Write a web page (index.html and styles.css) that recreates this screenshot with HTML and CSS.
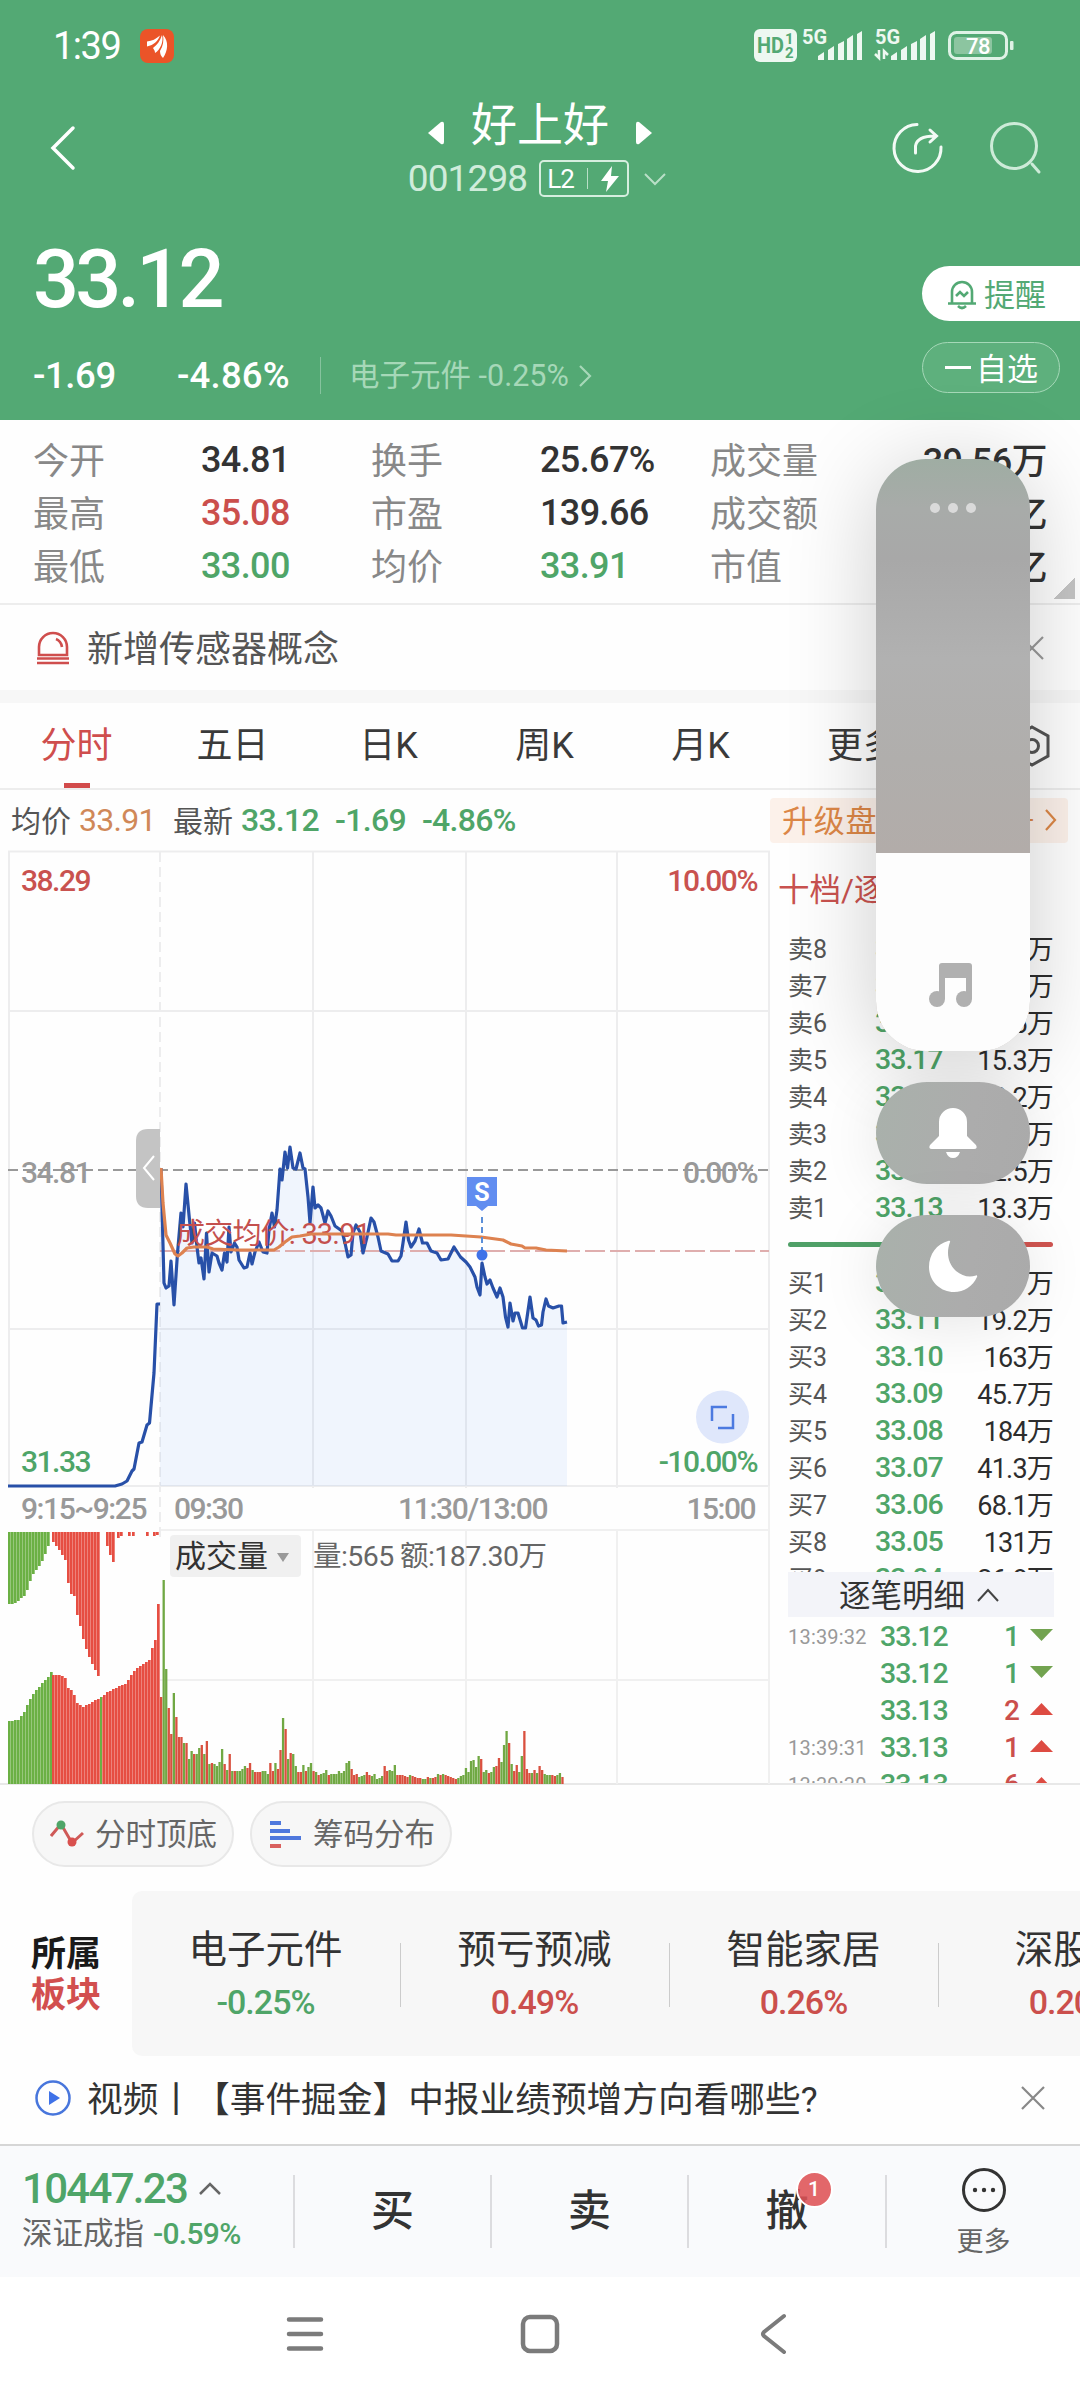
FILE: index.html
```html
<!DOCTYPE html>
<html lang="zh-CN">

<head>
    <meta charset="UTF-8">
    <meta name="viewport" content="width=device-width, initial-scale=1.0">
    <title>好上好 001298</title>
    <link rel="stylesheet" href="styles.css">
</head>

<body>

    <header class="header">
        <div class="status">
            <span class="clock">1:39</span>
            <svg class="app-icon" width="34" height="34" viewBox="0 0 34 34">
                <rect width="34" height="34" rx="8" fill="#eb5428"/>
                <path d="M7 17.500V12.500C12 12 16 10 20 6.500C18 12 14 16 7 17.500ZM13 19C17 16 20 12 22 6C24 13 20 21 15 24C15 22 14 20.500 13 19ZM20 22C23 17 24 12 23 6C29 12 28 22 23 29C21 27 20 25 20 22Z" fill="#fff"/>
            </svg>
            <svg class="status-icons" width="262" height="40" viewBox="752 26 262 40">
                <rect x="754" y="29" width="43" height="33" rx="6" fill="#eef8f1"/>
                <text x="757" y="53" class="hd" textLength="27" lengthAdjust="spacingAndGlyphs">HD</text>
                <text x="785" y="44" class="hd-num">1</text>
                <text x="785" y="58" class="hd-num">2</text>
                <text x="802" y="44" class="net">5G</text>
                <path d="M818 60V56L824 52V60ZM828 60V50L834 46V60ZM838 60V44L844 41V60ZM847 60V39L853 35V60ZM857 60V34L862 31V60Z" fill="#eef8f1"/>
                <text x="875" y="44" class="net">5G</text>
                <path d="M879 50v8l-4-4M884 59v-8l4 4" stroke="#eef8f1" stroke-width="2.500" fill="none"/>
                <path d="M891 60V56L897 52V60ZM901 60V50L907 46V60ZM911 60V44L917 41V60ZM920 60V39L926 35V60ZM930 60V34L935 31V60Z" fill="#eef8f1"/>
                <rect x="949.500" y="32.500" width="57" height="26" rx="7" fill="none" stroke="#dff2e6" stroke-width="3"/>
                <rect x="954" y="37" width="38" height="17" rx="3" fill="#8cc5a0"/>
                <rect x="1010" y="41" width="3.500" height="9" rx="1" fill="#dff2e6"/>
                <text x="978" y="54" class="batt">78</text>
            </svg>
        </div>

        <div class="nav">
            <svg class="back" width="28" height="48" viewBox="0 0 28 48"><path d="M25 4L5 24L25 44" fill="none" stroke="#fff" stroke-width="3.500" stroke-linecap="round"/></svg>
            <div class="title">
                <div class="name">
                    <svg width="16" height="24" viewBox="0 0 16 24"><path d="M0 12L13 1Q16 0 16 3V21Q16 24 13 23Z" fill="#fff"/></svg>
                    <h1>好上好</h1>
                    <svg width="16" height="24" viewBox="0 0 16 24"><path d="M16 12L3 1Q0 0 0 3V21Q0 24 3 23Z" fill="#fff"/></svg>
                </div>
                <div class="code">
                    <span>001298</span>
                    <span class="level">L2<i></i><svg width="18" height="26" viewBox="0 0 18 26"><path d="M11 0L0 15H7L5 26L18 10H10Z" fill="#fff"/></svg></span>
                    <svg width="22" height="14" viewBox="0 0 22 14"><path d="M1 2L11 12L21 2" fill="none" stroke="#b9dfc7" stroke-width="2"/></svg>
                </div>
            </div>
            <div class="tools">
                <svg width="54" height="54" viewBox="0 0 54 54" fill="none" stroke="#f2faf5" stroke-width="3" stroke-linecap="round"><path d="M27 3.500A23.500 23.500 0 1 0 51 26M25.500 32V25Q27 15 45 15M40 9L46.500 15L40 21"/></svg>
                <svg width="54" height="54" viewBox="0 0 54 54" fill="none" stroke="#cdebd8" stroke-width="3" stroke-linecap="round"><circle cx="26" cy="25" r="22.500"/><path d="M44 43L51 51"/></svg>
            </div>
        </div>

        <div class="quote">
            <div class="price">33.12</div>
            <div class="change">
                <span class="diff">-1.69</span>
                <span class="pct">-4.86%</span>
                <a class="industry">电子元件&nbsp; <b>-0.25%</b><svg width="13" height="24" viewBox="0 0 13 24"><path d="M1 2L11 12L1 22" fill="none" stroke="#a6d8b8" stroke-width="2.200"/></svg></a>
            </div>
        </div>
        <div class="actions">
            <button class="remind">
                <svg width="30" height="32" viewBox="0 0 30 32" fill="none" stroke="#53a974" stroke-width="2.600"><path d="M5 25V14A10 10 0 0 1 25 14V25M1 25.500H29M11 28Q15 32 19 28M9 18L13 14L17 18L21 14"/></svg>
                <span>提醒</span>
            </button>
            <button class="fav"><i></i><span>自选</span></button>
        </div>
    </header>

    <section class="stats">
        <span>今开</span><b>34.81</b><span>换手</span><b>25.67%</b><span>成交量</span><b class="end">39.56万</b>
        <span>最高</span><b class="red">35.08</b><span>市盈</span><b>139.66</b><span>成交额</span><b class="end">13.42亿</b>
        <span>最低</span><b class="green">33.00</b><span>均价</span><b class="green">33.91</b><span>市值</span><b class="end">51.03亿</b>
    </section>

    <section class="notice">
        <svg width="36" height="36" viewBox="0 0 36 36" fill="none" stroke="#cf4e4d" stroke-width="2.600"><path d="M4 25V17A14 14 0 0 1 32 17V25ZM2 33H34M2 28.500H34M21 9Q26 11 27 17"/></svg>
        <span>新增传感器概念</span>
        <svg class="close" width="26" height="26" viewBox="0 0 26 26"><path d="M2 2L24 24M24 2L2 24" stroke="#999" stroke-width="2.200"/></svg>
    </section>

    <nav class="tabs">
        <a class="active">分时</a>
        <a>五日</a>
        <a>日K</a>
        <a>周K</a>
        <a>月K</a>
        <a class="more">更多</a>
        <svg width="36" height="42" viewBox="0 0 36 42" fill="none" stroke="#555" stroke-width="3"><path d="M18 2L34 11V31L18 40L2 31V11Z"/><circle cx="18" cy="21" r="6.500"/></svg>
    </nav>

    <section class="infobar">
        <span>均价</span><b class="orange">33.91</b>
        <span class="latest">最新</span><b class="green">33.12</b>
        <b class="green gap">-1.69</b><b class="green gap">-4.86%</b>
        <a class="upgrade"><span>升级盘口买卖信号</span><svg width="12" height="22" viewBox="0 0 12 22"><path d="M1 1L10 11L1 21" fill="none" stroke="#dc8747" stroke-width="2.200"/></svg></a>
    </section>

    <main class="market">
        <svg id="chart" class="chart" width="770" height="935" viewBox="0 850 770 935">
            <g fill="none" stroke="#ededee" stroke-width="2">
                <path d="M8 851.500H769V1486H9V851M9 1011H769M9 1329H769M313 852V1488M466 852V1488M617 852V1488" stroke="#ededee"/>
                <path d="M160 1530H769M160 1680H769M313 1530V1784M466 1530V1784M617 1530V1784M769 1486V1784" stroke="#f0f0f0"/>
                <path d="M160 852V1540" stroke-dasharray="10 5"/>
            </g>
            <text x="21" y="1183" class="axis">34.81</text>
            <text x="757" y="1183" class="axis end">0.00%</text>
            <path d="M8 1170H769" stroke="#999" stroke-width="2" stroke-dasharray="10 5"/>
            <path id="area" fill="#4b86f0" fill-opacity=".08"/>
            <path d="M160 1251H769" stroke="#dfaeae" stroke-width="2" stroke-dasharray="20 5"/>
            <path id="auction" class="line blue"/>
            <path id="price" class="line blue"/>
            <text x="176" y="1244" class="avg-label" textLength="195">成交均价: 33.91</text>
            <path id="avg" class="line avg"/>
            <path d="M160 1129V1208H148Q136 1208 136 1196V1141Q136 1129 148 1129Z" fill="#c4c4c4"/>
            <path d="M154 1156L144 1168L154 1180" fill="none" stroke="#fff" stroke-width="2"/>
            <path d="M482 1217V1250" stroke="#5b8fd8" stroke-width="2" stroke-dasharray="6 4"/>
            <path d="M467 1177H497V1206H488L482 1211L476 1206H467Z" fill="#618df0"/>
            <text x="482" y="1201" class="marker">S</text>
            <circle cx="482" cy="1255" r="5.500" fill="#3f72e8"/>
            <circle cx="722.500" cy="1417" r="26.500" fill="#dfe7fb"/>
            <path d="M727 1407H712V1421M718 1428H733V1414" fill="none" stroke="#4c7ae0" stroke-width="2.500"/>
            <text x="21" y="891" class="axis red">38.29</text>
            <text x="757" y="891" class="axis red end">10.00%</text>
            <text x="21" y="1472" class="axis green">31.33</text>
            <text x="757" y="1472" class="axis green end">-10.00%</text>
            <text x="21" y="1519" class="axis" textLength="125">9:15~9:25</text>
            <text x="174" y="1519" class="axis">09:30</text>
            <text x="547" y="1519" class="axis end" textLength="149">11:30/13:00</text>
            <text x="755" y="1519" class="axis end">15:00</text>
            <g id="bars"></g>
            <rect x="170" y="1535" width="131" height="42" rx="4" fill="#f0f0f0"/>
            <text x="175" y="1567" class="vol-name">成交量</text>
            <path d="M277 1553H289L283 1562Z" fill="#999"/>
            <text x="313" y="1566" class="vol-info" textLength="234">量:565 额:187.30万</text>
        </svg>

        <aside class="book">
            <h2>十档/逐笔</h2>
            <div class="levels">
                <p><span>卖8</span><b>33.20</b><em>20.1万</em></p>
                <p><span>卖7</span><b>33.19</b><em>18.4万</em></p>
                <p><span>卖6</span><b>33.18</b><em>22.6万</em></p>
                <p><span>卖5</span><b>33.17</b><em>15.3万</em></p>
                <p><span>卖4</span><b>33.16</b><em>10.2万</em></p>
                <p><span>卖3</span><b>33.15</b><em>31.8万</em></p>
                <p><span>卖2</span><b>33.14</b><em>12.5万</em></p>
                <p><span>卖1</span><b>33.13</b><em>13.3万</em></p>
                <div class="ratio"><i></i></div>
                <p><span>买1</span><b>33.12</b><em>14.7万</em></p>
                <p><span>买2</span><b>33.11</b><em>19.2万</em></p>
                <p><span>买3</span><b>33.10</b><em>163万</em></p>
                <p><span>买4</span><b>33.09</b><em>45.7万</em></p>
                <p><span>买5</span><b>33.08</b><em>184万</em></p>
                <p><span>买6</span><b>33.07</b><em>41.3万</em></p>
                <p><span>买7</span><b>33.06</b><em>68.1万</em></p>
                <p><span>买8</span><b>33.05</b><em>131万</em></p>
                <p><span>买9</span><b>33.04</b><em>26.8万</em></p>
            </div>
            <div class="ticks-head"><span>逐笔明细</span><svg width="22" height="14" viewBox="0 0 22 14"><path d="M1 13L11 2L21 13" fill="none" stroke="#444" stroke-width="2"/></svg></div>
            <div class="ticks">
                <p><time>13:39:32</time><b>33.12</b><em class="green">1</em><i class="down"></i></p>
                <p><time></time><b>33.12</b><em class="green">1</em><i class="down"></i></p>
                <p><time></time><b>33.13</b><em class="red">2</em><i class="up"></i></p>
                <p><time>13:39:31</time><b>33.13</b><em class="red">1</em><i class="up"></i></p>
                <p><time>13:39:30</time><b>33.13</b><em class="red">6</em><i class="up"></i></p>
            </div>
        </aside>
    </main>

    <section class="chips">
        <a>
            <svg width="34" height="30" viewBox="0 0 34 30"><path d="M1 17L11 5L22 24L33 14" fill="none" stroke="#cf5a58" stroke-width="3"/><circle cx="11" cy="6" r="4.500" fill="#4fa568"/><circle cx="22" cy="23" r="4.500" fill="#d9504e"/></svg>
            <span>分时顶底</span>
        </a>
        <a>
            <svg width="34" height="30" viewBox="0 0 34 30" stroke-width="4"><path d="M2 4H13M2 12H22M2 19H33" stroke="#4f78dd"/><path d="M2 27H13" stroke="#d9605e"/></svg>
            <span>筹码分布</span>
        </a>
    </section>

    <section class="sectors">
        <h3>所属<br><span>板块</span></h3>
        <div class="sector-list">
            <div class="sector"><span>电子元件</span><b class="green">-0.25%</b></div>
            <div class="sector"><span>预亏预减</span><b class="red">0.49%</b></div>
            <div class="sector"><span>智能家居</span><b class="red">0.26%</b></div>
            <div class="sector"><span>深股通</span><b class="red">0.20%</b></div>
        </div>
    </section>

    <section class="video">
        <svg width="36" height="36" viewBox="0 0 36 36"><circle cx="18" cy="18" r="16.500" fill="none" stroke="#4876dc" stroke-width="2.500"/><path d="M14 11L25 18L14 25Z" fill="#3f72e8"/></svg>
        <span>视频丨【事件掘金】中报业绩预增方向看哪些?</span>
        <svg class="close" width="26" height="26" viewBox="0 0 26 26"><path d="M2 2L24 24M24 2L2 24" stroke="#888" stroke-width="2.200"/></svg>
    </section>

    <footer class="trade">
        <div class="index">
            <div class="index-value">10447.23<svg width="24" height="14" viewBox="0 0 24 14"><path d="M2 13L12 3L22 13" fill="none" stroke="#666" stroke-width="2.500"/></svg></div>
            <div class="index-name">深证成指<b class="green">-0.59%</b></div>
        </div>
        <a>买</a>
        <a>卖</a>
        <a><span class="cancel">撤<i>1</i></span></a>
        <a class="menu">
            <svg width="46" height="46" viewBox="0 0 46 46"><circle cx="23" cy="23" r="20.500" fill="none" stroke="#333" stroke-width="3"/><g fill="#333"><circle cx="14" cy="23" r="2.200"/><circle cx="23" cy="23" r="2.200"/><circle cx="32" cy="23" r="2.200"/></g></svg>
            <small>更多</small>
        </a>
    </footer>

    <div class="sysnav">
        <svg width="44" height="44" viewBox="0 0 44 44" stroke="#7b7b7b" stroke-width="4.500" stroke-linecap="round"><path d="M5 7.500H37M5 22H37M5 36.500H37"/></svg>
        <svg width="44" height="44" viewBox="0 0 44 44"><rect x="5" y="5" width="34" height="34" rx="7" fill="none" stroke="#7b7b7b" stroke-width="4.500"/></svg>
        <svg width="44" height="44" viewBox="0 0 44 44"><path d="M32 4L12 20Q10 22 12 24L32 40" fill="none" stroke="#7b7b7b" stroke-width="4" stroke-linecap="round"/></svg>
    </div>

    <!-- system volume panel -->
    <div class="volume">
        <div class="slider">
            <div class="dots"><i></i><i></i><i></i></div>
            <div class="fill">
                <svg width="46" height="46" viewBox="0 0 46 46" fill="#b0b0b0"><path d="M11 4Q11 1 14 1H41Q44 1 44 4V37H38V16H17V37H11Z"/><circle cx="9" cy="37" r="8"/><circle cx="36" cy="37" r="8"/></svg>
            </div>
        </div>
        <div class="round">
            <svg width="50" height="54" viewBox="0 0 50 54" fill="#fff"><path d="M11 16A14 14 0 0 1 39 16V30L48 39Q50 43 46 43H4Q0 43 2 39L11 30ZM18 46H32Q30 52 25 52Q20 52 18 46Z"/></svg>
        </div>
        <div class="round">
            <svg width="50" height="54" viewBox="0 0 50 54" fill="#fff"><path d="M22 3C18 14 20 24 28 32C34 37 41 39 48 36.500C49 36 49.500 37 49 38C45 47 36 53 26 53C12 53 1 42 1 28C1 15 9 5 20 2C22 1.500 22.500 2 22 3Z"/></svg>
        </div>
    </div>

    <script src="chart.js"></script>
</body>

</html>
```
FILE: styles.css
```css
body {
    margin: 0;
    position: relative;
    width: 1080px;
    height: 2400px;
    overflow: hidden;
    background-color: #fefefe;
    color: #333;
    font-family: Roboto, "Noto Sans CJK SC", sans-serif;
}

* {
    box-sizing: border-box;
}

h1, h2, h3, p {
    margin: 0;
    font-weight: normal;
}

b {
    font-weight: 500;
}

em, i {
    font-style: normal;
}

svg {
    flex: none;
}

button {
    font-family: inherit;
}

.red { color: #cb4f4c; fill: #c9524f; }
.green { color: #4fa568; fill: #4fa568; }
.orange { color: #d08858; }

/* header */
.header {
    display: grid;
    grid-template-columns: 1fr 160px;
    grid-template-rows: 90px 115px 215px;
    height: 420px;
    background-color: #53a974;
    color: #fff;
}

.status {
    grid-column: span 2;
    display: flex;
    align-items: center;
    padding: 2px 66px 0 53px;
}

.clock {
    width: 87px;
    font-size: 38px;
    letter-spacing: -1.500px;
}

.status-icons {
    margin-left: auto;
}

.hd { font-size: 22px; font-weight: 700; fill: #53a974; }
.hd-num { font-size: 15px; font-weight: 700; fill: #53a974; }
.net { font-size: 20px; font-weight: 700; fill: #eef8f1; }
.batt { font-size: 22px; fill: #fff; text-anchor: middle; font-weight: 500; letter-spacing: -.5px; }

.nav {
    grid-column: span 2;
    display: grid;
    grid-template-columns: 200px 1fr 200px;
    align-items: center;
}

.back {
    margin-left: 48px;
    margin-top: 1px;
}

.title {
    margin-top: -3px;
}

.name, .code {
    display: flex;
    justify-content: center;
    align-items: center;
}

.name {
    height: 65px;
}

.name svg {
    margin-top: 15px;
}

.name h1 {
    margin: 0 27px;
    font-size: 46px;
    line-height: 60px;
}

.code {
    height: 42px;
    padding-right: 6px;
    gap: 15px;
    font-size: 37px;
    letter-spacing: -.9px;
    color: #d0ecdb;
}

.level {
    display: flex;
    align-items: center;
    justify-content: space-between;
    width: 90px;
    height: 37px;
    padding: 0 8px 0 6px;
    margin-left: -3px;
    border: 2px solid #d6eedf;
    border-radius: 5px;
    font-size: 26px;
    color: #fff;
}

.level i {
    width: 1px;
    height: 21px;
    background-color: #b9dfc7;
}

.tools {
    display: flex;
    gap: 44px;
    padding-left: 10px;
}

.quote {
    padding: 27px 0 0 33px;
}

.price {
    height: 96px;
    line-height: 96px;
    font-size: 81px;
    font-weight: 500;
    letter-spacing: -3.800px;
}

.change {
    display: flex;
    align-items: center;
    height: 38px;
    margin-top: 27px;
    padding-top: 3px;
    font-size: 36.500px;
    letter-spacing: -.4px;
}

.diff {
    width: 144px;
    font-weight: 500;
}

.pct {
    width: 143px;
    font-weight: 500;
    letter-spacing: .2px;
}

.industry {
    display: flex;
    align-items: center;
    height: 37px;
    padding-left: 28px;
    border-left: 1px solid #86c39e;
    font-size: 30.500px;
    line-height: 30px;
    letter-spacing: 0;
    color: #a6d8b8;
}

.industry b {
    font-weight: 400;
}

.industry svg {
    margin-left: 10px;
}

.actions {
    padding-top: 61px;
}

.actions button {
    display: flex;
    align-items: center;
    font-size: 31px;
    margin-left: 2px;
}

.actions span {
    margin-top: -2px;
}

.remind {
    width: 158px;
    height: 55px;
    gap: 7px;
    padding: 0 0 0 25px;
    border: none;
    border-radius: 28px 0 0 28px;
    background-color: #fff;
    color: #53a974;
}

.fav {
    width: 138px;
    height: 51px;
    margin-top: 21px;
    padding: 0 0 0 22px;
    border: 1.500px solid #a6d8b8;
    border-radius: 26px;
    background-color: #5eb07d;
    color: #fff;
}

.fav i {
    width: 26px;
    height: 3px;
    margin-right: 5px;
    background-color: #fff;
}

/* quote details */
.stats {
    display: grid;
    grid-template-columns: 168px 170px 169px 170px 155px 1fr;
    grid-auto-rows: 53px;
    align-items: center;
    height: 185px;
    padding: 13px 33px 0 33px;
    border-bottom: 2px solid #ededed;
    background: linear-gradient(135deg, transparent 50%, #c4c4c4 50%) 1054px 158px / 21px 21px no-repeat;
    font-size: 36px;
}

.stats span {
    margin-top: -4px;
    color: #888;
}

.stats b {
    letter-spacing: -.6px;
}

.stats .end {
    margin-top: -3px;
    text-align: right;
}

.notice {
    display: flex;
    align-items: center;
    height: 98px;
    padding: 0 35px;
    border-bottom: 13px solid #f7f7f7;
    font-size: 36px;
    color: #555;
}

.notice span, .video span {
    margin-top: -3px;
    margin-left: 16px;
}

.close {
    margin-left: auto;
}

.tabs {
    display: flex;
    align-items: center;
    height: 87px;
    border-bottom: 2px solid #ededed;
    font-size: 36px;
    color: #3a3a3a;
}

.tabs a {
    width: 156px;
    height: 87px;
    padding-right: 3px;
    line-height: 89px;
    text-align: center;
}

.tabs .active {
    color: #cf4e4d;
    background: linear-gradient(#d24b4b, #d24b4b) 64px 81px / 26px 5px no-repeat;
}

.tabs .more {
    padding-left: 13px;
}

.tabs svg {
    margin-left: 78px;
}

.infobar {
    display: flex;
    align-items: center;
    height: 60px;
    padding-left: 11px;
    font-size: 30px;
    color: #555;
}

.infobar span {
    margin-top: -3px;
}

.infobar b {
    margin-left: 8px;
    font-size: 32px;
    letter-spacing: -.7px;
}

.infobar .orange {
    font-weight: 400;
}

.infobar .latest {
    margin-left: 17px;
}

.infobar .gap {
    margin-left: 16px;
}

.upgrade {
    display: flex;
    align-items: center;
    justify-content: space-between;
    width: 298px;
    height: 45px;
    margin-left: auto;
    margin-right: 12px;
    padding: 0 11px 0 12px;
    border-radius: 4px;
    background-color: #fcf1ea;
    font-size: 31px;
    letter-spacing: .7px;
    color: #dc8747;
}

/* chart and order book */
.market {
    display: flex;
    height: 935px;
    border-bottom: 2px solid #e8e8e8;
}

.axis {
    font-size: 30px;
    font-weight: 500;
    letter-spacing: -1.500px;
    fill: #999;
}

.axis.red { fill: #c9524f; }
.axis.green { fill: #4fa568; }

.chart .end {
    text-anchor: end;
}

.line {
    fill: none;
    stroke-width: 3.200;
    stroke-linejoin: round;
}

.line.blue { stroke: #2850a8; }
.line.avg { stroke: #dd8250; }

.avg-label {
    font-size: 29px;
    fill: #c4504e;
}

.marker {
    font-size: 25px;
    font-weight: 700;
    fill: #fff;
    text-anchor: middle;
}

.vol-name {
    font-size: 31px;
    fill: #333;
}

.vol-info {
    font-size: 28.500px;
    fill: #666;
}

.book {
    width: 284px;
    padding: 0 0 0 18px;
}

.book h2 {
    height: 80px;
    margin-left: -10px;
    line-height: 81px;
    font-size: 31.500px;
    color: #c9524f;
}

.levels {
    height: 642px;
    padding-right: 1px;
    overflow: hidden;
}

.levels p, .ticks p {
    display: flex;
    align-items: center;
    height: 37px;
}

.levels span {
    width: 87px;
    margin-top: -3px;
    font-size: 25px;
    color: #555;
}

.levels b, .ticks b {
    font-size: 28.500px;
    letter-spacing: -1px;
    color: #4fa568;
}

.levels em {
    margin-top: -3px;
    margin-left: auto;
    font-size: 27px;
    letter-spacing: -.8px;
    color: #2d2d2d;
}

.ratio {
    height: 38px;
    padding-top: 16px;
}

.ratio i {
    display: block;
    height: 5px;
    border-radius: 3px;
    background: linear-gradient(90deg, #4fa067 70%, #cf5450 70%);
}

.ticks-head {
    display: flex;
    align-items: center;
    justify-content: center;
    gap: 12px;
    width: 266px;
    height: 45px;
    padding-right: 4px;
    background-color: #f3f4f9;
    font-size: 31.500px;
}

.ticks-head span {
    margin-top: -3px;
}

.ticks {
    height: 166px;
    padding-top: 1px;
    overflow: hidden;
}

.ticks time {
    width: 92px;
    font-size: 20px;
    letter-spacing: .2px;
    color: #999;
}

.ticks em {
    width: 50px;
    margin-left: auto;
    text-align: right;
    font-size: 28px;
    font-weight: 500;
}

.ticks i {
    width: 23px;
    height: 12px;
    margin: -3px 1px 0 10px;
}

.down {
    background-color: #72a350;
    clip-path: polygon(0 0, 100% 0, 50% 100%);
}

.up {
    background-color: #dd4b42;
    clip-path: polygon(50% 0, 100% 100%, 0 100%);
}

.chips {
    display: flex;
    gap: 16px;
    padding: 16px 32px 24px;
}

.chips a {
    display: flex;
    align-items: center;
    gap: 11px;
    width: 202px;
    height: 66px;
    padding-left: 16px;
    border: 2px solid #e8e8e8;
    border-radius: 33px;
    background-color: #f7f7f7;
    font-size: 30.500px;
    color: #666;
    white-space: nowrap;
}

.chips span {
    margin-top: -4px;
}

.sectors {
    display: flex;
    height: 165px;
}

.sectors h3 {
    width: 132px;
    flex: none;
    padding: 43px 0 0 31px;
    font-size: 35px;
    font-weight: 700;
    line-height: 41px;
    color: #1a1a1a;
}

.sectors h3 span {
    color: #d24f4f;
}

.sector-list {
    display: flex;
    width: 948px;
    overflow: hidden;
    padding-top: 32px;
    border-radius: 10px 0 0 10px;
    background-color: #f7f7f7;
}

.sector {
    flex: none;
    width: 269px;
    padding-right: 2px;
    text-align: center;
    background: linear-gradient(#ccc, #ccc) right 20px / 1px 64px no-repeat;
}

.sector span, .sector b {
    display: block;
    height: 54px;
    line-height: 54px;
    font-size: 38.500px;
}

.sector b {
    height: 50px;
    line-height: 50px;
    font-size: 34px;
    letter-spacing: -1px;
}

.video {
    display: flex;
    align-items: center;
    height: 88px;
    padding: 0 34px 4px 35px;
    font-size: 35.700px;
}

/* bottom trade bar */
.trade {
    display: grid;
    grid-template-columns: 293px 197px 197px 198px 1fr;
    align-items: center;
    height: 133px;
    border-top: 2px solid #d6d6d6;
    background-color: #f9fafc;
}

.index {
    padding-left: 22px;
}

.index-value {
    display: flex;
    align-items: center;
    gap: 11px;
    height: 46px;
    font-size: 42px;
    font-weight: 500;
    letter-spacing: -1.700px;
    color: #4fa568;
}

.index-name {
    height: 47px;
    line-height: 46px;
    font-size: 30.500px;
    color: #666;
}

.index-name b {
    margin-left: 9px;
    font-size: 30px;
    letter-spacing: -.7px;
}

.trade a {
    height: 73px;
    line-height: 73px;
    border-left: 2px solid #dcdcdf;
    text-align: center;
    font-size: 43px;
    font-weight: 500;
}

.cancel {
    position: relative;
}

.cancel i {
    position: absolute;
    top: -15px;
    right: -24px;
    width: 37px;
    height: 37px;
    border: 2px solid #fff;
    border-radius: 50%;
    background-color: rgba(222, 82, 85, .88);
    color: #fff;
    font-size: 21px;
    line-height: 33px;
}

.trade .menu {
    display: flex;
    flex-direction: column;
    align-items: center;
    justify-content: center;
    padding-top: 6px;
}

.menu small {
    font-size: 27px;
    font-weight: 400;
    line-height: 40px;
    margin-top: 9px;
    color: #666;
}

.sysnav {
    display: flex;
    justify-content: center;
    gap: 190px;
    height: 124px;
    padding-top: 35px;
    background-color: #fff;
}

/* floating volume panel */
.volume {
    position: absolute;
    top: 459px;
    left: 876px;
    width: 154px;
}

.slider {
    display: flex;
    flex-direction: column;
    justify-content: space-between;
    height: 592px;
    overflow: hidden;
    border-radius: 50px;
    background: linear-gradient(#9fada3 0, #a8aba9 50px, #a8a8a8 100px, #b1b1b1 200px, #b0aeac 300px, #b2aca9 394px);
    box-shadow: 0 10px 90px rgba(0, 0, 0, .2);
}

.dots {
    display: flex;
    justify-content: center;
    gap: 8px;
    padding-top: 44px;
}

.dots i {
    width: 10px;
    height: 10px;
    border-radius: 50%;
    background-color: #dadada;
}

.fill {
    height: 198px;
    padding: 109px 0 0 52px;
    background-color: #fdfdfd;
}

.round {
    display: flex;
    align-items: center;
    justify-content: center;
    height: 102px;
    margin-top: 31px;
    border-radius: 51px;
    background: linear-gradient(100deg, #a9b1ab, #acacac 60%, #aaa);
    box-shadow: 0 6px 60px rgba(0, 0, 0, .1);
}
```
FILE: chart.js
```js
// points are x,y pairs in chart coordinates
const auction = '8,1486 115,1486 122,1484 127,1481 130,1475 132,1471 134,1469 139,1443 142,1442 147,1425 149.5,1423 154,1373 157,1304 160,1304';

const price = '161,1168 164,1283 166,1288 169,1286 171,1261 174,1305 177.5,1253 181,1213 183,1227 186,1184 189.5,1220 192,1243 194.5,1223 197,1247 199,1263 201,1258 204,1279 206.5,1233 209,1272 212,1253 217,1256 219,1263 222,1270 224.5,1253 227,1262 229,1227 231,1252 234.5,1243 237,1247 239,1260 244,1268 247,1267 250,1253 252,1264 255,1252 259,1242 263,1252 267,1253 269,1230 272,1213 274.5,1227 277,1210 280,1169 282,1180 285,1152 287.5,1168 290,1147 293,1168 296,1169 300,1153 303,1168 305,1169 308,1197 310,1223 313,1187 315,1208 318,1205 321,1208 325,1223 328,1211 331,1216 335,1226 342,1231 345,1243 348,1257 351,1255 353,1233 356,1225 360,1232 363,1253 367,1237 371,1218 374,1222 378,1237 381,1251 388,1254 392,1261 398,1261 401,1256 403,1243 406,1222 408.5,1240 411,1247 415,1241 419,1229 422.5,1243 427,1243 431,1251 437,1253 441,1260 448,1259 454,1247 460.5,1257 466,1262 470,1267 475,1277 477,1287 480,1295 482,1263 485,1277 487,1284 490,1280 493,1288 497,1297 500,1288 503,1297 505.5,1317 508,1327 510,1303 513,1321 515,1313 518,1313 522.5,1328 525.5,1328 530,1297 533,1318 536,1320 538.5,1326 541.5,1325 543,1312 546,1299 548.5,1306 553,1308 559,1306 561.5,1306 563,1323 567,1322';

const avg = '161,1168 163,1203 166,1235 170,1243 175,1254 178,1256 182,1253 187,1248 194,1247 207,1247 213,1249 237,1250 274,1250 279,1247 285,1242 292,1237 300,1236 311,1234 388,1234 396,1235 451,1235 466,1236 481,1237 503,1240 511,1244 522,1246 525,1248 536,1248 546,1250 567,1251';

// one entry per minute: colour and bar height
const volume = 'r87 g204 g115 r76 r50 g91 r67 r47 r47 g41 r41 g25 g33 r30 g30 g36 r39 g30 r43 g20 r21 g20 g18 g22 g35 r20 g14 r30 g13 r13 g13 g13 g15 g18 r16 r21 g14 r12 r12 r12 g13 g13 g10 r21 r13 g21 r15 r34 g66 r55 g25 r31 g30 g18 r12 r12 g19 r13 g17 g21 r13 g12 r9 g10 g11 g14 r9 g10 g10 g10 g13 g11 g13 g21 g23 r15 r9 r10 g7 g8 g9 r12 r9 g8 g10 g5 g6 g8 r18 r13 g14 g13 g19 r9 r9 r9 r8 r7 g9 r8 r7 r6 r6 g5 g5 r7 g6 r6 r7 g10 r9 g10 r9 r8 r7 r6 r5 g6 g8 g9 g16 g12 g23 g24 g17 g28 r25 g12 g14 r11 g12 g17 r18 r26 g22 g39 g53 r41 g20 r13 r19 g12 g28 r53 r15 r11 g11 r14 g11 r18 r14 g10 g9 g9 r9 r8 g9 g11 r7';

// auction profiles
const unmatchedGreen = [[8, 1604], [14, 1604], [19, 1600], [25, 1595], [28, 1587], [32, 1575], [38, 1568], [44, 1557], [51, 1538]];
const unmatchedRed = [[52, 1541], [60, 1551], [65, 1560], [67, 1580], [72, 1597], [75, 1596], [77, 1615], [81, 1630], [84, 1643], [88, 1655], [94, 1668], [100, 1680]];
const unmatchedTail = [[106, 1543], [110, 1555], [116, 1568]];
const matchedGreen = [[8, 1721], [18, 1720], [24, 1712], [28, 1702], [33, 1694], [38, 1688], [43, 1682], [47, 1678], [52, 1671]];
const matchedRed = [[52, 1675], [60, 1675], [65, 1678], [67, 1687], [73, 1691], [76, 1702], [82, 1707], [88, 1704], [94, 1701], [101, 1697], [107, 1692], [115, 1688], [125, 1684], [129, 1678], [135, 1669], [142, 1665], [149, 1660], [152, 1648], [155, 1640], [157, 1604], [159, 1604]];

const GREEN = '#6bb044';
const RED = '#e64e42';
const bars = document.getElementById('bars');

function addBar(x, top, bottom, width, color) {
    const rect = document.createElementNS('http://www.w3.org/2000/svg', 'rect');
    rect.setAttribute('x', x);
    rect.setAttribute('y', top);
    rect.setAttribute('width', width);
    rect.setAttribute('height', bottom - top);
    rect.setAttribute('fill', color);
    bars.appendChild(rect);
}

function valueAt(points, x) {
    for (let i = 1; i < points.length; i++) {
        const [x0, y0] = points[i - 1];
        const [x1, y1] = points[i];
        if (x <= x1) return y0 + (y1 - y0) * (x - x0) / (x1 - x0);
    }
    return points[points.length - 1][1];
}

function drawProfile(points, color, hanging) {
    const end = points[points.length - 1][0];
    for (let x = points[0][0]; x < end - 1; x += 3) {
        const y = Math.round(valueAt(points, x + 1));
        if (hanging) addBar(x, 1532, y, 2.7, color);
        else addBar(x, y, 1784, 2.7, color);
    }
}

function toPath(points) {
    return 'M' + points.split(' ').join('L');
}

document.getElementById('auction').setAttribute('d', toPath(auction));
document.getElementById('price').setAttribute('d', toPath(price));
document.getElementById('avg').setAttribute('d', toPath(avg));
document.getElementById('area').setAttribute('d', toPath(price) + 'V1486H160V1168Z');

drawProfile(unmatchedGreen, GREEN, true);
drawProfile(unmatchedRed, RED, true);
drawProfile(unmatchedTail, RED, true);
drawProfile(matchedGreen, GREEN, false);
drawProfile(matchedRed, RED, false);
[[117, 6], [120, 4], [128, 4], [132, 4], [146, 4], [153, 4], [156, 3]].forEach(([x, h]) => addBar(x, 1532, 1532 + h, 2.7, RED));
addBar(100, 1697, 1784, 2, GREEN);

volume.split(' ').forEach((item, i) => {
    const height = Number(item.slice(1));
    addBar(160 + i * 2.54, 1784 - height, 1784, 2.3, item[0] === 'g' ? '#70a843' : '#d9503f');
});
```
